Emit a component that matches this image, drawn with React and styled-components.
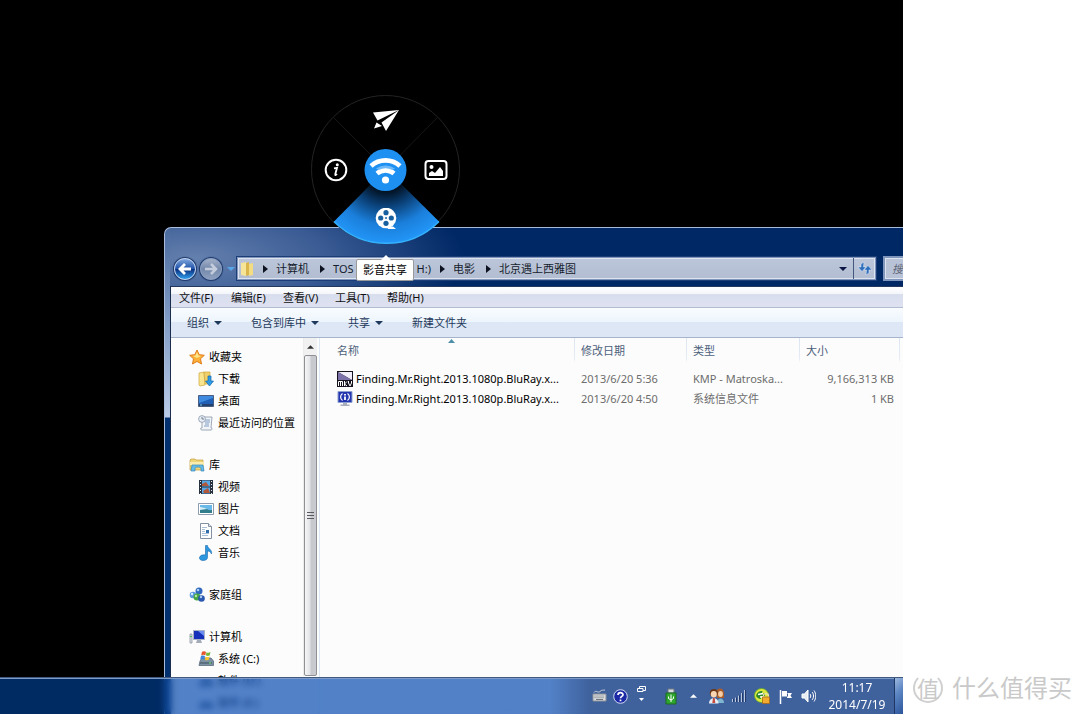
import React from 'react';
import styled, { createGlobalStyle } from 'styled-components';

const GlobalStyle = createGlobalStyle`
    * { box-sizing: border-box; }
    body {
        margin: 0;
        background: #fff;
        font-family: "Noto Sans", "Noto Sans CJK SC", sans-serif;
        font-size: 11px;
        line-height: 16px;
        color: #111;
    }
    button {
        font: inherit;
        color: inherit;
        background: none;
        border: 0;
        padding: 0;
        margin: 0;
        cursor: pointer;
    }
    svg { display: block; flex: none; }
`;

const Page = styled.div`
    display: flex;
    min-height: 100vh;
    overflow: hidden;
`;

const Screen = styled.main`
    position: relative;
    flex: 1;
    min-width: 0;
    height: 100vh;
    display: flex;
    flex-direction: column;
    padding: 227px 0 0 164px;
    background: #000;
    overflow: hidden;
`;

/* ---------- explorer window ---------- */

const Window = styled.section`
    flex: 1;
    min-height: 0;
    display: flex;
    flex-direction: column;
    padding-left: 5px;
    border: 1px solid #a9bcdc;
    border-width: 1px 0 0 1px;
    border-radius: 7px 0 0 0;
    background:
        linear-gradient(#4a6a9e 0, #7f9ac4 90px, #b9cbe6 189px, #02306f 190px, #02306f) 0 0 / 5px 100% no-repeat,
        radial-gradient(ellipse 270px 90px at 30px 30px, #6480ae, #395a93 50%, #002864);
    overflow: hidden;
`;

const AddressRow = styled.div`
    display: flex;
    align-items: center;
    padding: 28px 0 5px 4px;
`;

const RoundButton = styled.button`
    width: 22px;
    height: 22px;
    margin-right: 4px;
    border-radius: 50%;
    border: 1px solid ${p => (p.$dim ? '#8ba0c0' : '#c3d6f2')};
    background: ${p => (p.$dim
        ? 'linear-gradient(#a3b0c8, #7388ab 50%, #8ea1bf)'
        : 'linear-gradient(#7ea5dc, #1d50a8 50%, #0a2c7c 51%, #2fa0ee)')};
    box-shadow: 0 0 1px 1px #1b3565;
    display: grid;
    place-items: center;
`;

const History = styled.button`
    width: 10px;
    height: 22px;
    display: grid;
    place-items: center;
`;

const AddressBar = styled.div`
    flex: 1;
    height: 25px;
    display: flex;
    align-items: center;
    padding-left: 2px;
    border: 2px solid #7f95bb;
    outline: 1px solid #1d3d77;
    outline-offset: -1px;
    background: linear-gradient(#bcc6da, #b2bdd2);
    box-shadow: inset 0 0 0 1px #dde4f0;
    color: #151c2c;
`;

const Crumb = styled.button`
    display: flex;
    justify-content: space-between;
    min-width: ${p => p.$min}px;
    margin-left: 8px;
    white-space: nowrap;
`;

const CrumbArrow = styled.svg`
    margin-left: 9px;
`;

const AddressEnd = styled.div`
    display: flex;
    align-items: center;
    height: 100%;
    margin-left: auto;
`;

const AddressButton = styled.button`
    width: ${p => p.$w}px;
    height: 100%;
    display: grid;
    place-items: center;
    border-left: ${p => (p.$line ? '1px solid #44577c' : '0')};
`;

const SearchBox = styled.input`
    width: 200px;
    height: 25px;
    margin: 0 -180px 0 6px;
    padding: 0 7px;
    border: 2px solid #7f95bb;
    border-radius: 0;
    background: #b9c3d7;
    box-shadow: inset 0 0 0 1px #dde4f0;
    font: italic 11px "Noto Sans", "Noto Sans CJK SC", sans-serif;
    &::placeholder { color: #5d6577; opacity: 1; }
`;

const Client = styled.div`
    flex: 1;
    min-height: 0;
    display: flex;
    flex-direction: column;
    border-left: 1px solid #1c2c4c;
    border-top: 1px solid #24385f;
    background: #fcfcfc;
`;

const MenuBar = styled.nav`
    display: flex;
    height: 21px;
    border-bottom: 1px solid #b3bbd0;
    background: linear-gradient(#fff 0, #f3f5fa 35%, #d9deee 36%, #dde1f0);
`;

const MenuButton = styled.button`
    width: 52px;
    padding-top: 1px;
    padding-left: 8px;
    text-align: left;
    white-space: nowrap;
`;

const CommandBar = styled.div`
    display: flex;
    height: 30px;
    padding-left: 16px;
    border-bottom: 1px solid #a6b4cb;
    background: linear-gradient(#f8fcff 0, #edf5fc 48%, #dde7f5 49%, #dce6f4);
    color: #1e395b;
`;

const Command = styled.button`
    display: flex;
    align-items: center;
    gap: 5px;
    margin-right: 29px;
`;

const Panes = styled.div`
    flex: 1;
    min-height: 0;
    display: flex;
`;

const NavPane = styled.nav`
    width: 132px;
    display: flex;
    flex-direction: column;
    gap: 20px;
    padding: 8px 0 0 18px;
    overflow: hidden;
`;

const NavList = styled.ul`
    margin: 0;
    padding: 0;
    list-style: none;
`;

const NavItem = styled.li`
    height: 22px;
    padding-left: ${p => (p.$head ? 0 : 9)}px;
`;

const NavLink = styled.a`
    display: flex;
    align-items: center;
    gap: 4px;
    height: 100%;
    color: #000;
    text-decoration: none;
    white-space: nowrap;
`;

const ScrollBar = styled.div`
    width: 14px;
    margin-bottom: 38px;
    display: flex;
    flex-direction: column;
    border-left: 1px solid #ececec;
    background: #f1f1f2;
`;

const ScrollUp = styled.button`
    height: 17px;
    display: grid;
    place-items: center;
`;

const Thumb = styled.div`
    flex: 1;
    display: grid;
    place-items: center;
    border: 1px solid #8f8f94;
    border-radius: 2px;
    background: linear-gradient(90deg, #f6f6f7, #e2e3e6 45%, #c6c8ce 55%, #c9cbd1);
`;

const FilePane = styled.div`
    flex: 1;
    min-width: 0;
    margin-left: 2px;
    padding: 0 3px 0 11px;
    border-left: 1px solid #dbe7f5;
`;

const FileTable = styled.table`
    width: 100%;
    table-layout: fixed;
    border-collapse: collapse;
`;

const HeadCell = styled.th`
    position: relative;
    width: ${p => (p.$w ? p.$w + 'px' : 'auto')};
    height: 31px;
    padding: 0 0 5px 6px;
    text-align: left;
    font-weight: normal;
    color: #4c607a;
    background: linear-gradient(#dce6f2, #e4ebf4 80%, #fcfcfc) right top / 1px 25px no-repeat;
`;

const SortMark = styled.svg`
    position: absolute;
    top: 1px;
    left: 48%;
`;

const Cell = styled.td`
    height: 20px;
    padding: 0 6px;
    color: #6d6d6d;
    white-space: nowrap;
    text-align: ${p => (p.$right ? 'right' : 'left')};
`;

const FileName = styled.span`
    display: flex;
    align-items: center;
    gap: 3px;
    color: #000;
`;

/* ---------- taskbar ---------- */

const TaskBar = styled.footer`
    position: absolute;
    left: 0;
    right: 0;
    bottom: 0;
    height: 37px;
    display: flex;
    align-items: center;
    justify-content: flex-end;
    border-top: 1px solid #42597f;
    box-shadow: inset 0 1px 0 #7d9bc9;
    background: linear-gradient(90deg, rgba(0, 62, 145, .68) 0, rgba(0, 62, 145, .68) 160px, rgba(2, 71, 175, .68) 180px, rgba(2, 71, 175, .68) 550px, rgba(0, 46, 125, .75) 590px);
    backdrop-filter: blur(3px);
    color: #fff;
`;

const TraySlot = styled.button`
    width: ${p => p.$w || 23}px;
    height: 100%;
    margin-right: ${p => p.$gap || 0}px;
    display: grid;
    place-items: center;
`;

const Clock = styled.time`
    width: 74px;
    text-align: center;
    font-size: 12px;
    line-height: 17px;
`;

const ShowDesktop = styled.button`
    width: 9px;
    height: 100%;
    border-left: 1px solid #1d3866;
    background: linear-gradient(135deg, #9fb9e0, #5d86c4 40%, #2c549a);
`;

/* ---------- share wheel ---------- */

const Wheel = styled.div`
    position: absolute;
    left: 311px;
    top: 95px;
    display: grid;
    grid-template: repeat(3, 50px) / repeat(3, 50px);
`;

const WheelBack = styled.svg`
    position: absolute;
    inset: 0;
`;

const WheelButton = styled.button`
    position: relative;
    grid-area: ${p => p.$at};
    display: grid;
    place-items: center;
`;

const Tip = styled.div`
    position: absolute;
    left: 356px;
    top: 259px;
    width: 58px;
    height: 22px;
    border: 1px solid #9a9a9a;
    border-radius: 2px;
    background: #fff;
    color: #000;
    text-align: center;
    line-height: 20px;
    white-space: nowrap;
    &::before {
        content: "";
        position: absolute;
        left: 24px;
        top: -5px;
        border: 5px solid transparent;
        border-top: 0;
        border-bottom-color: #fff;
    }
`;

/* ---------- watermark ---------- */

const Side = styled.aside`
    width: 177px;
    display: flex;
    flex-wrap: wrap;
    align-items: center;
    align-content: flex-end;
    padding: 0 0 8px 10px;
    gap: 9px;
    color: #c9c9c9;
`;

const Seal = styled.span`
    width: 30px;
    height: 30px;
    border: 2px solid #d0d0d0;
    border-top-color: transparent;
    border-radius: 50%;
    text-align: center;
    font-size: 22px;
    line-height: 22px;
    display: grid;
    place-items: center;
`;

const Brand = styled.span`
    font-size: 24px;
    line-height: 36px;
    white-space: nowrap;
`;

/* ---------- small drawings ---------- */

const Down = ({ color = '#1e395b' }) => (
    <svg width="8" height="4" viewBox="0 0 8 4"><path d="M0 0h8L4 4z" fill={color} /></svg>
);

const Up = ({ color = '#333' }) => (
    <svg width="7" height="4" viewBox="0 0 8 4"><path d="M0 4h8L4 0z" fill={color} /></svg>
);

const Icon = ({ children, size = 16 }) => (
    <svg width={size} height={size} viewBox="0 0 16 16">{children}</svg>
);

const icons = {
    star: (
        <Icon>
            <path d="M8 1l2.2 4.7 5.1.6-3.8 3.5 1 5.2L8 12.4 3.5 15l1-5.2L.7 6.3l5.1-.6z" fill="#fbb03a" stroke="#e07b1c" />
            <path d="M8 3l1.500 3.500 2.500.5-4 2-4-2 2.500-.5z" fill="#ffe58a" />
        </Icon>
    ),
    download: (
        <Icon>
            <path d="M1 2l5-1 1 13-5 1-1-1z" fill="#f9e48f" stroke="#cfa63c" strokeWidth=".7" />
            <path d="M6 1h6v12H7z" fill="#efcf68" stroke="#cfa63c" strokeWidth=".7" />
            <path d="M10 5h3v5h2.500l-4 5-4-5H10z" fill="#2f9be4" stroke="#1767ad" strokeWidth=".7" />
        </Icon>
    ),
    desktop: (
        <Icon>
            <path d="M.5 2.500h15v11H.5z" fill="#1f5fb6" stroke="#4a5f80" />
            <path d="M1 3h14v2L1 10z" fill="#3f8be0" />
            <path d="M1 11h14v2H1z" fill="#23406f" />
            <path d="M2 11.500h2v1H2z" fill="#7fd0f5" />
        </Icon>
    ),
    recent: (
        <Icon>
            <path d="M4 2h10l-1 11c2 0 1 2 0 2H4c-1 0-2-1-1-2h1z" fill="#f3f5f8" stroke="#8795a8" strokeWidth=".8" />
            <path d="M7 5h5M7 7h5M7 9h4M6 11h5" stroke="#7d9cc4" />
            <circle cx="4" cy="4" r="3.4" fill="#e9eef5" stroke="#8b98ab" strokeWidth=".8" />
            <path d="M4 2v2h2" fill="none" stroke="#55667f" strokeWidth=".8" />
        </Icon>
    ),
    library: (
        <Icon>
            <path d="M1 3l1-1h4l1 1h7v10H1z" fill="#f0d678" stroke="#c59d3c" strokeWidth=".7" />
            <path d="M1 5h14v3H1z" fill="#fbedad" />
            <path d="M3 8h11l1 6h-3v-2.500c0-2-6-2-6 0V14H2z" fill="#64bce8" stroke="#3787ba" strokeWidth=".7" />
        </Icon>
    ),
    video: (
        <Icon>
            <path d="M1 1h14v14H1z" fill="#29333f" />
            <path d="M4 1.500h8v6H4zM4 8.500h8v6H4z" fill="#58a8e6" />
            <path d="M4 5l4-2 3 4H4zM5 12l5-3 2 5H6z" fill="#b1573a" />
            <path d="M2.500 2v13M13.500 2v13" stroke="#e5ebf2" strokeWidth="1" strokeDasharray="1 2" />
        </Icon>
    ),
    picture: (
        <Icon>
            <path d="M.5 2.500h15v11H.5z" fill="#fff" stroke="#8d9bae" />
            <path d="M2 4h12v8H2z" fill="#68b9ea" />
            <path d="M2 7c4-2 7 3 12 2v3H2z" fill="#317d8b" />
            <path d="M2 6c3 0 5 1 7 2l-7 1z" fill="#d4eefa" />
        </Icon>
    ),
    document: (
        <Icon>
            <path d="M2.500.5h8l3 3v12h-11z" fill="#fff" stroke="#8491a3" />
            <path d="M10.500.5v3h3" fill="#dfe6ef" stroke="#8491a3" />
            <path d="M4 4.500h5M4 6.500h3M4 8.500h3M4 10.500h7M4 12.500h6" stroke="#a9bdd6" />
            <path d="M8 7h3v3H8z" fill="#2f6fae" />
        </Icon>
    ),
    music: (
        <Icon>
            <path d="M7.500.5h2c0 3 5 4 4 8.500-1-2-2-3-4-3v6.500c0 2-2 3-4.500 3S1 14 1.500 12.500C2.200 10 5 9.500 7.500 10z" fill="#2d97df" stroke="#1768ad" strokeWidth=".6" />
        </Icon>
    ),
    homegroup: (
        <Icon>
            <circle cx="10" cy="4" r="3.5" fill="#2f67bd" />
            <circle cx="4" cy="8" r="3.3" fill="#5b9ae0" />
            <circle cx="8" cy="10" r="3.5" fill="#46a646" />
            <circle cx="12.5" cy="11.5" r="3.3" fill="#2a58ae" />
            <circle cx="9" cy="3" r="1.3" fill="#a9d0f7" />
            <circle cx="3" cy="7" r="1.2" fill="#d8ecff" />
            <circle cx="7" cy="9" r="1.2" fill="#b7e7a6" />
            <circle cx="12" cy="10" r="1.2" fill="#a9c9f4" />
        </Icon>
    ),
    computer: (
        <Icon>
            <path d="M1 5h2v9H1z" fill="#dfe3ea" stroke="#7e8899" strokeWidth=".7" />
            <path d="M4.500 1.500h11v9h-11z" fill="#1630ba" stroke="#aab3c3" />
            <path d="M9 2h6v5z" fill="#6d8cf0" />
            <path d="M8 11h4l1 3H7z" fill="#a4acba" />
            <path d="M1 7h2v1H1z" fill="#4fbf57" />
        </Icon>
    ),
    drive: (
        <Icon>
            <path d="M2 10l2-3h9l2.500 3v4.500H1z" fill="#7d91a5" stroke="#4d6072" strokeWidth=".7" />
            <path d="M2 11h12v2H2z" fill="#5b6f80" />
            <path d="M11 11.500h2v1h-2z" fill="#6df26b" />
            <path d="M4 .7c2-1 3-.5 4 .2L7.300 4.300C6 3.600 5 3.500 3.200 4.300z" fill="#e9552b" />
            <path d="M8.500 1.200c1.500.8 2.500.6 4-.2l-.8 3.400c-1.500.7-2.500.6-3.900-.1z" fill="#74b93c" />
            <path d="M3 5c1.700-.8 2.700-.6 4 .1l-.8 3.400C5 7.800 4 7.800 2.200 8.500z" fill="#3f86da" />
            <path d="M7.700 5.500c1.500.8 2.500.6 3.900-.1l-.8 3.400c-1.500.7-2.500.6-3.900-.1z" fill="#fac52c" />
        </Icon>
    ),
    disk: (
        <Icon>
            <path d="M2 9l2-2h8l3 2v4H1z" fill="#8b98a6" stroke="#4d6072" strokeWidth=".7" />
            <path d="M2 10h12v2H2z" fill="#5b6f80" />
        </Icon>
    ),
    mkv: (
        <Icon>
            <path d="M0 0h16v16H0z" fill="#16131f" />
            <path d="M1 1h14v8z" fill="#f1eef9" />
            <path d="M1 1v8h14z" fill="#7c70aa" />
            <path d="M1.500 15v-4.500h4V15M3.500 11v4M7.500 10v5M10 10.500L7.500 13l2.500 2M11.500 10v2l1.500 3 1.500-3v-2" fill="none" stroke="#fff" />
        </Icon>
    ),
    info: (
        <Icon>
            <path d="M1 .5h14v11H1z" fill="#2336b0" stroke="#8fa0d0" />
            <path d="M6 12h4v1.500H6zM3.500 13.500h9V15h-9z" fill="#a8afbb" />
            <path d="M5.500 2.500C3 4 3 8 5.500 9.500M10.500 2.500c2.500 1.500 2.500 5.500 0 7" fill="none" stroke="#fff" strokeWidth="1.2" />
            <path d="M8 3v1.500M8 5.500V9" stroke="#fff" strokeWidth="1.8" />
        </Icon>
    ),
};

const navGroups = [
    [['star', '收藏夹'], ['download', '下载'], ['desktop', '桌面'], ['recent', '最近访问的位置']],
    [['library', '库'], ['video', '视频'], ['picture', '图片'], ['document', '文档'], ['music', '音乐']],
    [['homegroup', '家庭组']],
    [['computer', '计算机'], ['drive', '系统 (C:)'], ['disk', '软件 (D:)'], ['disk', '软件 (E:)']],
];

const files = [
    { icon: 'mkv', name: 'Finding.Mr.Right.2013.1080p.BluRay.x...', date: '2013/6/20 5:36', type: 'KMP - Matroska...', size: '9,166,313 KB' },
    { icon: 'info', name: 'Finding.Mr.Right.2013.1080p.BluRay.x...', date: '2013/6/20 4:50', type: '系统信息文件', size: '1 KB' },
];

// the drive crumb is split in two, its middle lies under the tooltip
const crumbs = [
    [['计算机'], 35],
    [['TOS', 'H:)'], 98],
    [['电影'], 24],
    [['北京遇上西雅图'], 80],
];

const commands = [['组织', true], ['包含到库中', true], ['共享', true], ['新建文件夹', false]];

const Explorer = () => (
    <Window>
        <AddressRow>
            <RoundButton aria-label="后退">
                <svg width="14" height="12" viewBox="0 0 14 12"><path d="M7 1L2 6l5 5M2.500 6H13" fill="none" stroke="#fff" strokeWidth="2.8" /></svg>
            </RoundButton>
            <RoundButton $dim aria-label="前进">
                <svg width="14" height="12" viewBox="0 0 14 12"><path d="M7 1l5 5-5 5M11.500 6H1" fill="none" stroke="#c3ccdb" strokeWidth="2.6" /></svg>
            </RoundButton>
            <History aria-label="历史"><Down color="#58a7e8" /></History>
            <AddressBar>
                <svg width="14" height="16" viewBox="0 0 14 16">
                    <path d="M1 2l5-1v14l-5-1z" fill="#f7e597" />
                    <path d="M6 2l3-1v13l-3 1z" fill="#d9b54c" />
                    <path d="M9 3l4-1v12l-4 1z" fill="#f3dc82" />
                </svg>
                {crumbs.map(([parts, min]) => (
                    <React.Fragment key={parts[0]}>
                        <CrumbArrow width="5" height="8" viewBox="0 0 5 8"><path d="M0 0l5 4-5 4z" fill="#0c1220" /></CrumbArrow>
                        <Crumb $min={min}>{parts.map(part => <span key={part}>{part}</span>)}</Crumb>
                    </React.Fragment>
                ))}
                <AddressEnd>
                    <AddressButton $w={20} aria-label="展开"><Down color="#0b1644" /></AddressButton>
                    <AddressButton $w={22} $line aria-label="刷新">
                        <svg width="14" height="13" viewBox="0 0 14 13">
                            <path d="M6 0L3 2v3H0l4 4.500L8 5H5.500z" fill="#2f70bd" stroke="#e4eefb" strokeWidth=".5" />
                            <path d="M8 13l3-2V8h3l-4-4.500L6 8h2.500z" fill="#2f70bd" stroke="#e4eefb" strokeWidth=".5" />
                        </svg>
                    </AddressButton>
                </AddressEnd>
            </AddressBar>
            <SearchBox type="search" aria-label="搜索" placeholder="搜索 北京遇上西雅图" />
        </AddressRow>
        <Client>
            <MenuBar>
                {['文件(F)', '编辑(E)', '查看(V)', '工具(T)', '帮助(H)'].map(text => <MenuButton key={text}>{text}</MenuButton>)}
            </MenuBar>
            <CommandBar>
                {commands.map(([text, menu]) => <Command key={text}>{text}{menu && <Down />}</Command>)}
            </CommandBar>
            <Panes>
                <NavPane>
                    {navGroups.map(group => (
                        <NavList key={group[0][1]}>
                            {group.map(([icon, text], i) => (
                                <NavItem key={text} $head={i === 0}>
                                    <NavLink href="#">{icons[icon]}{text}</NavLink>
                                </NavItem>
                            ))}
                        </NavList>
                    ))}
                </NavPane>
                <ScrollBar>
                    <ScrollUp aria-label="向上滚动"><Up /></ScrollUp>
                    <Thumb>
                        <svg width="7" height="8" viewBox="0 0 7 8"><path d="M0 .5h7M0 3.500h7M0 6.500h7" stroke="#5a5a60" /></svg>
                    </Thumb>
                </ScrollBar>
                <FilePane>
                    <FileTable>
                        <thead>
                            <tr>
                                <HeadCell>
                                    名称
                                    <SortMark width="7" height="4" viewBox="0 0 7 4"><path d="M0 4h7L3.500 0z" fill="#4f8fa8" /></SortMark>
                                </HeadCell>
                                <HeadCell $w={112}>修改日期</HeadCell>
                                <HeadCell $w={113}>类型</HeadCell>
                                <HeadCell $w={100}>大小</HeadCell>
                            </tr>
                        </thead>
                        <tbody>
                            {files.map(f => (
                                <tr key={f.date}>
                                    <Cell><FileName>{icons[f.icon]}{f.name}</FileName></Cell>
                                    <Cell>{f.date}</Cell>
                                    <Cell>{f.type}</Cell>
                                    <Cell $right>{f.size}</Cell>
                                </tr>
                            ))}
                        </tbody>
                    </FileTable>
                </FilePane>
            </Panes>
        </Client>
    </Window>
);

const Tray = () => (
    <TaskBar>
        <TraySlot $w={21} aria-label="键盘">
            <svg width="15" height="14" viewBox="0 0 15 14">
                <path d="M2 3.500c2-3 4 1 6-1s3-1 5-1.500" fill="none" stroke="#c9ced6" />
                <path d="M1 5h13v7H1z" fill="#d9dbdd" stroke="#8b8f96" />
                <path d="M2.500 7h10M2.500 8.700h10" stroke="#70757d" strokeDasharray="1 1" />
                <path d="M4 10.500h7" stroke="#70757d" />
            </svg>
        </TraySlot>
        <TraySlot $w={21} aria-label="帮助">
            <svg width="15" height="15" viewBox="0 0 15 15">
                <circle cx="7.5" cy="7.5" r="6.8" fill="#1d2aa6" stroke="#d3daf2" />
                <path d="M5 6c0-3 5-3 5-.3C10 7.500 7.500 7.300 7.500 9.200M7.500 10.500v1.700" fill="none" stroke="#fff" strokeWidth="1.7" />
            </svg>
        </TraySlot>
        <TraySlot $w={21} $gap={7} aria-label="语言栏选项">
            <svg width="9" height="24" viewBox="0 0 9 24">
                <path d="M2.500 4V2.500h6v4H6M.5 4.500H6v3H.5z" fill="none" stroke="#fff" />
                <path d="M2 14h5l-2.500 3z" fill="#fff" />
            </svg>
        </TraySlot>
        <TraySlot aria-label="USB">
            <svg width="12" height="17" viewBox="0 0 12 17">
                <path d="M3 1h6v4H3z" fill="#d6dbe0" stroke="#6c767e" />
                <path d="M1 5h10v11H1z" fill="#2fa62f" stroke="#186b1d" />
                <path d="M6 14V6.500M3.500 8.500v2L6 12l2.500-1.500v-2" fill="none" stroke="#fff" />
            </svg>
        </TraySlot>
        <TraySlot aria-label="显示隐藏的图标"><Up color="#fff" /></TraySlot>
        <TraySlot aria-label="用户">
            <svg width="16" height="16" viewBox="0 0 16 16">
                <path d="M8 2c3-3 7-1 7 3v5H8z" fill="#a85b2b" />
                <ellipse cx="11.5" cy="6" rx="2.4" ry="3" fill="#f6cda5" />
                <path d="M8 15c0-6 7-6 7 0z" fill="#7fb5ce" />
                <circle cx="4.8" cy="5" r="4" fill="#6b3717" />
                <ellipse cx="4.8" cy="6.3" rx="3" ry="3.3" fill="#f9d5b2" />
                <path d="M0 15.500c0-7 9.500-7 9.500 0z" fill="#e9edf4" />
                <path d="M4 10h1.700l.6 5h-3z" fill="#c94a3b" />
            </svg>
        </TraySlot>
        <TraySlot aria-label="网络">
            <svg width="15" height="12" viewBox="0 0 15 12">
                <path d="M0 9h2v3H0zM3 7.500h2V12H3zM6 5.500h2V12H6zM9 3h2v9H9zM12 0h2v12h-2z" fill="#20386a" />
                <path d="M0 9h1v3H0zM3 7.500h1V12H3zM6 5.500h1V12H6zM9 3h1v9H9zM12 0h1v12h-1z" fill="#b9c8e0" />
            </svg>
        </TraySlot>
        <TraySlot aria-label="安全卫士">
            <svg width="17" height="16" viewBox="0 0 17 16">
                <circle cx="7.5" cy="7.5" r="7" fill="#e0ea3c" stroke="#5da52c" strokeWidth=".8" />
                <path d="M2 8C3 4 5 3 8.500 3L8 5.500h3V8H7v3C5 11 3 10 2 8z" fill="#2f8a2b" />
                <path d="M4 6.500l5-1M6 9h3" stroke="#fff" strokeWidth="1.3" />
                <path d="M9.500 9V7.500c0-2.500 5-2.500 5 0V9" fill="none" stroke="#ece0b4" strokeWidth="1.2" />
                <path d="M8.500 9h7v6.500h-7z" fill="#f2ab2f" stroke="#a66a15" strokeWidth=".8" />
            </svg>
        </TraySlot>
        <TraySlot aria-label="操作中心">
            <svg width="14" height="15" viewBox="0 0 14 15">
                <path d="M1.500 1v14" stroke="#fff" strokeWidth="1.5" />
                <path d="M3 2h5v2h5l-1.500 2.500L13 9H8V7.500H3z" fill="#fff" />
                <path d="M8.500 4.500v3" stroke="#47639a" />
            </svg>
        </TraySlot>
        <TraySlot aria-label="音量">
            <svg width="15" height="14" viewBox="0 0 15 14">
                <path d="M1 5h2.500L7 1v12L3.500 9H1z" fill="#e7ebf2" stroke="#fff" />
                <path d="M9 5c1 1 1 3 0 4M11 3c2 2 2 6 0 8M13 1.500c2.300 3 2.300 8 0 11" fill="none" stroke="#fff" />
            </svg>
        </TraySlot>
        <Clock>11:17<br />2014/7/19</Clock>
        <ShowDesktop aria-label="显示桌面" />
    </TaskBar>
);

const ShareWheel = () => (
    <Wheel>
        <WheelBack width="150" height="150" viewBox="0 0 150 150">
            <defs>
                <radialGradient id="slice" gradientUnits="userSpaceOnUse" cx="75" cy="75" r="74">
                    <stop offset=".28" stopColor="#02101f" />
                    <stop offset=".48" stopColor="#0a3f75" />
                    <stop offset=".75" stopColor="#1b7fdb" />
                    <stop offset="1" stopColor="#2296f8" />
                </radialGradient>
            </defs>
            <circle cx="74.5" cy="74.5" r="74" fill="#000" stroke="#232323" />
            <path d="M22 22l106 106M127 22L22 128" stroke="#161616" />
            <path d="M75 74L23 126.500A74 74 0 0 0 128 126.500z" fill="url(#slice)" />
            <path d="M23 126.500A74 74 0 0 0 128 126.500" fill="none" stroke="#35b2ff" strokeWidth="1.5" />
        </WheelBack>
        <WheelButton $at="1 / 2" aria-label="发送">
            <svg width="26" height="24" viewBox="0 0 26 24">
                <path d="M26 2L0 4.500l4.500 8zM26 2L8.500 14.500 13 23zM3.500 14.500L9 18l-8 2.500z" fill="#fff" />
            </svg>
        </WheelButton>
        <WheelButton $at="2 / 1" aria-label="信息">
            <svg width="24" height="24" viewBox="0 0 24 24">
                <circle cx="12" cy="12" r="10.3" fill="none" stroke="#fff" strokeWidth="2" />
                <circle cx="13.3" cy="6.8" r="1.5" fill="#fff" />
                <path d="M10 10.300l3-.5-1.800 6.700c-.3 1 .8.600 1.800-.5" fill="none" stroke="#fff" strokeWidth="1.8" />
            </svg>
        </WheelButton>
        <WheelButton $at="2 / 2" aria-label="无线共享">
            <svg width="44" height="44" viewBox="0 0 44 44">
                <circle cx="21.5" cy="22" r="21" fill="#1e90f2" />
                <path d="M7 18a21.500 21.500 0 0 1 29 0M13 25.500a13 13 0 0 1 17 0" fill="none" stroke="#fff" strokeWidth="4.6" />
                <path d="M12 20.500a17 17 0 0 1 19 0l-3 1.500a14 14 0 0 0-13 0z" fill="#7fc2fa" opacity=".8" />
                <circle cx="21.5" cy="32" r="3.6" fill="#fff" />
            </svg>
        </WheelButton>
        <WheelButton $at="2 / 3" aria-label="图片共享">
            <svg width="24" height="20" viewBox="0 0 24 20">
                <rect x="1.5" y="1" width="21" height="18" rx="3" fill="none" stroke="#fff" strokeWidth="2" />
                <circle cx="7.5" cy="7" r="2" fill="#fff" />
                <path d="M5 16v-3l3-2 3 2 5-6 3 4v5z" fill="#fff" />
            </svg>
        </WheelButton>
        <WheelButton $at="3 / 2" aria-label="影音共享">
            <svg width="24" height="24" viewBox="0 0 24 24">
                <circle cx="12" cy="10" r="10.3" fill="#fff" />
                <path d="M13 18.500h6l3 2.500h-8z" fill="#fff" />
                <g fill="#17609f">
                    <circle cx="12" cy="4.7" r="2.6" />
                    <circle cx="12" cy="15.3" r="2.6" />
                    <circle cx="6.7" cy="10" r="2.6" />
                    <circle cx="17.3" cy="10" r="2.6" />
                    <circle cx="12" cy="10" r="1" />
                </g>
            </svg>
        </WheelButton>
    </Wheel>
);

const App = () => {

return (
    <Page>
        <GlobalStyle />
        <Screen>
            <Explorer />
            <Tray />
            <ShareWheel />
            <Tip role="tooltip">影音共享</Tip>
        </Screen>
        <Side>
            <Seal>值</Seal>
            <Brand>什么值得买</Brand>
        </Side>
    </Page>
)};

export default App;
